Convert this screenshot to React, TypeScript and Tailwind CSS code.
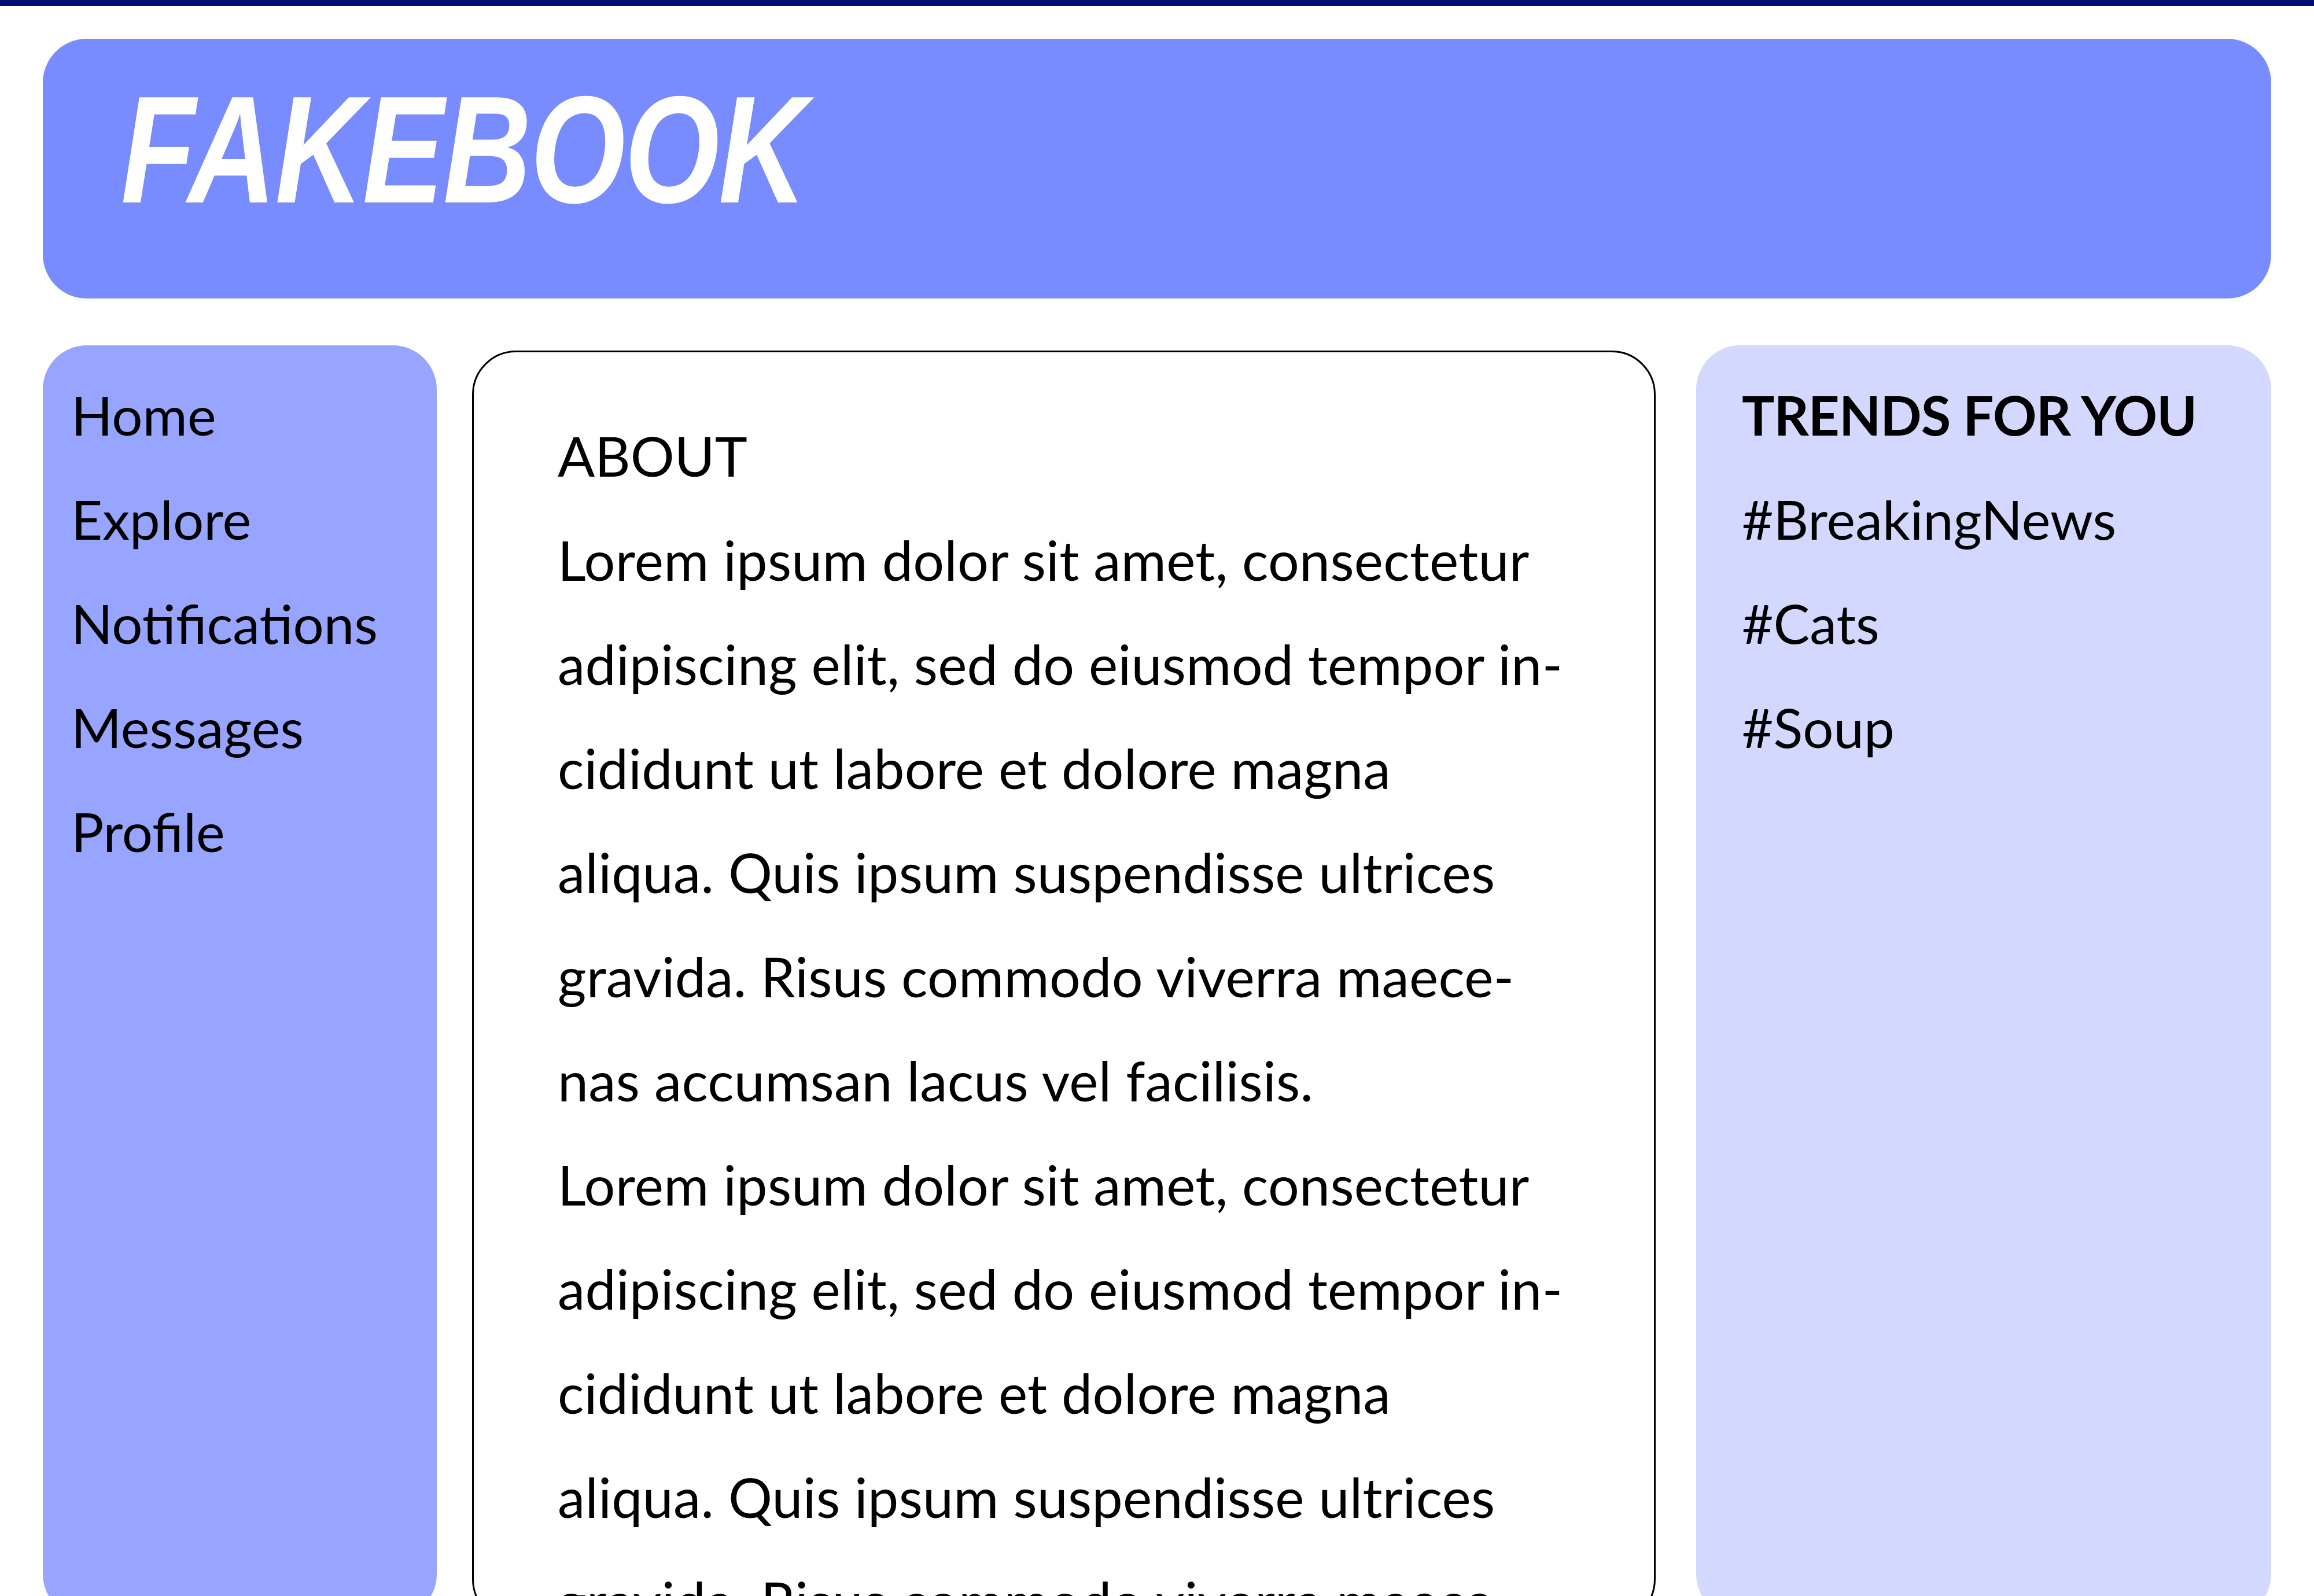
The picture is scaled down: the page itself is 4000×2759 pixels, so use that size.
import React from 'react';

const navItems = ['Home', 'Explore', 'Notifications', 'Messages', 'Profile'];
const trends = ['#BreakingNews', '#Cats', '#Soup'];

const aboutLines = [
  'Lorem ipsum dolor sit amet, consectetur',
  'adipiscing elit, sed do eiusmod tempor in-',
  'cididunt ut labore et dolore magna',
  'aliqua. Quis ipsum suspendisse ultrices',
  'gravida. Risus commodo viverra maece-',
  'nas accumsan lacus vel facilisis.',
];

const App: React.FC = () => {
  return (
    <div className="h-[2759px] overflow-hidden bg-white font-['Lato',sans-serif] text-black">
      {/* Top strip */}
      <div className="h-[10px] bg-[#000c73]" />

      <div className="px-[74px] pt-[57px]">
        {/* Header */}
        <header className="h-[449px] rounded-[76px] bg-[#788bff] pl-[135px] pt-[42px]">
          <h1 className="inline-block origin-left scale-x-[0.8] font-['Liberation_Sans',sans-serif] text-[264px] font-bold italic leading-[300px] tracking-[-2px] text-white">
            FAKEBOOK
          </h1>
        </header>

        {/* Columns */}
        <div className="mt-[81px] flex items-start">
          <nav className="h-[2200px] w-[681px] shrink-0 rounded-[76px] bg-[#97a5ff] pl-[49px] pt-[30px]">
            {navItems.map((item) => (
              <div key={item} className="text-[94px] leading-[180px]">
                {item}
              </div>
            ))}
          </nav>

          <main className="ml-[61px] mt-[9px] h-[2200px] w-[2046px] shrink-0 rounded-[76px] border-[3px] border-black pl-[145px] pt-[88px]">
            <div className="text-[95px] leading-[180px]">ABOUT</div>
            {[...aboutLines, ...aboutLines].map((line, i) => (
              <div key={i} className="whitespace-nowrap text-[95px] leading-[180px] tracking-[0.3px]">
                {line}
              </div>
            ))}
          </main>

          <aside className="ml-[70px] h-[2200px] w-[994px] shrink-0 rounded-[76px] bg-[#d4d8fe] pl-[79px] pt-[30px]">
            <div className="text-[94px] font-bold leading-[180px] tracking-[-1px]">TRENDS FOR YOU</div>
            {trends.map((t) => (
              <div key={t} className="text-[94px] leading-[180px]">
                {t}
              </div>
            ))}
          </aside>
        </div>
      </div>
    </div>
  );
};

export default App;
